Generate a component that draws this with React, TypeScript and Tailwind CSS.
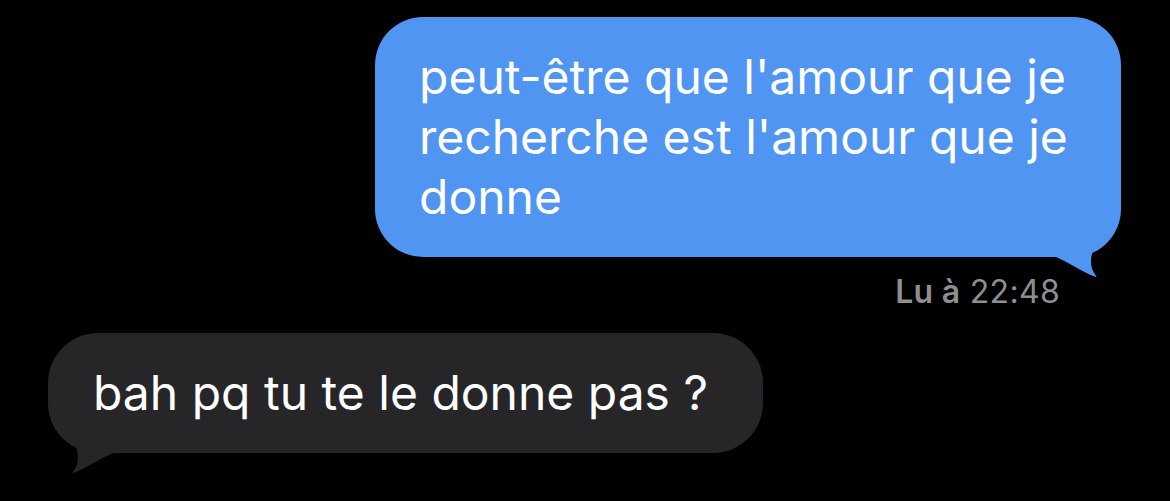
import React from "react";

const FONT = { fontFamily: "Inter, 'Liberation Sans', sans-serif" };

// little curled tail under the bubble; drawn for the right side, mirrored for the left
function Tail({ color, side }: { color: string; side: "left" | "right" }) {
  const pos = side === "right" ? "right-[-1px]" : "left-[-1px]";
  return (
    <svg
      viewBox="0 0 72 50"
      className={`absolute bottom-[-23px] w-[72px] h-[50px] ${pos}`}
      aria-hidden
    >
      <g transform={side === "left" ? "translate(72 0) scale(-1 1)" : undefined}>
        <path
          d="M58 2 C54 13 44 17 42 24 C40 31 41 38 44 43 C45.5 45.5 47.5 46.5 46 47 C36 44 20 33 6 27 L0 27 L0 2 Z"
          fill={color}
        />
      </g>
    </svg>
  );
}

export default function App() {
  return (
    <div className="w-[1170px] h-[501px] bg-black overflow-hidden flex flex-col pt-[17px]" style={FONT}>
      {/* sent */}
      <div className="self-end mr-[49px] relative w-[746px] rounded-[48px] bg-[#5095f2] pl-[44px] py-[30px] text-white text-[48px] leading-[60px] whitespace-nowrap">
        peut-être que l'amour que je
        <br />
        recherche est l'amour que je
        <br />
        donne
        <Tail color="#5095f2" side="right" />
      </div>

      <div className="self-end mr-[110px] mt-[15px] text-[32px] leading-[40px] text-[#8e8e93] tracking-[0.3px]">
        <span className="font-semibold">Lu à</span> 22:48
      </div>

      {/* received */}
      <div className="self-start ml-[48px] mt-[21px] relative w-[715px] rounded-[50px] bg-[#262629] pl-[45px] py-[30px] text-white text-[48px] leading-[60px] whitespace-nowrap">
        bah pq tu te le donne pas ?
        <Tail color="#262629" side="left" />
      </div>
    </div>
  );
}
